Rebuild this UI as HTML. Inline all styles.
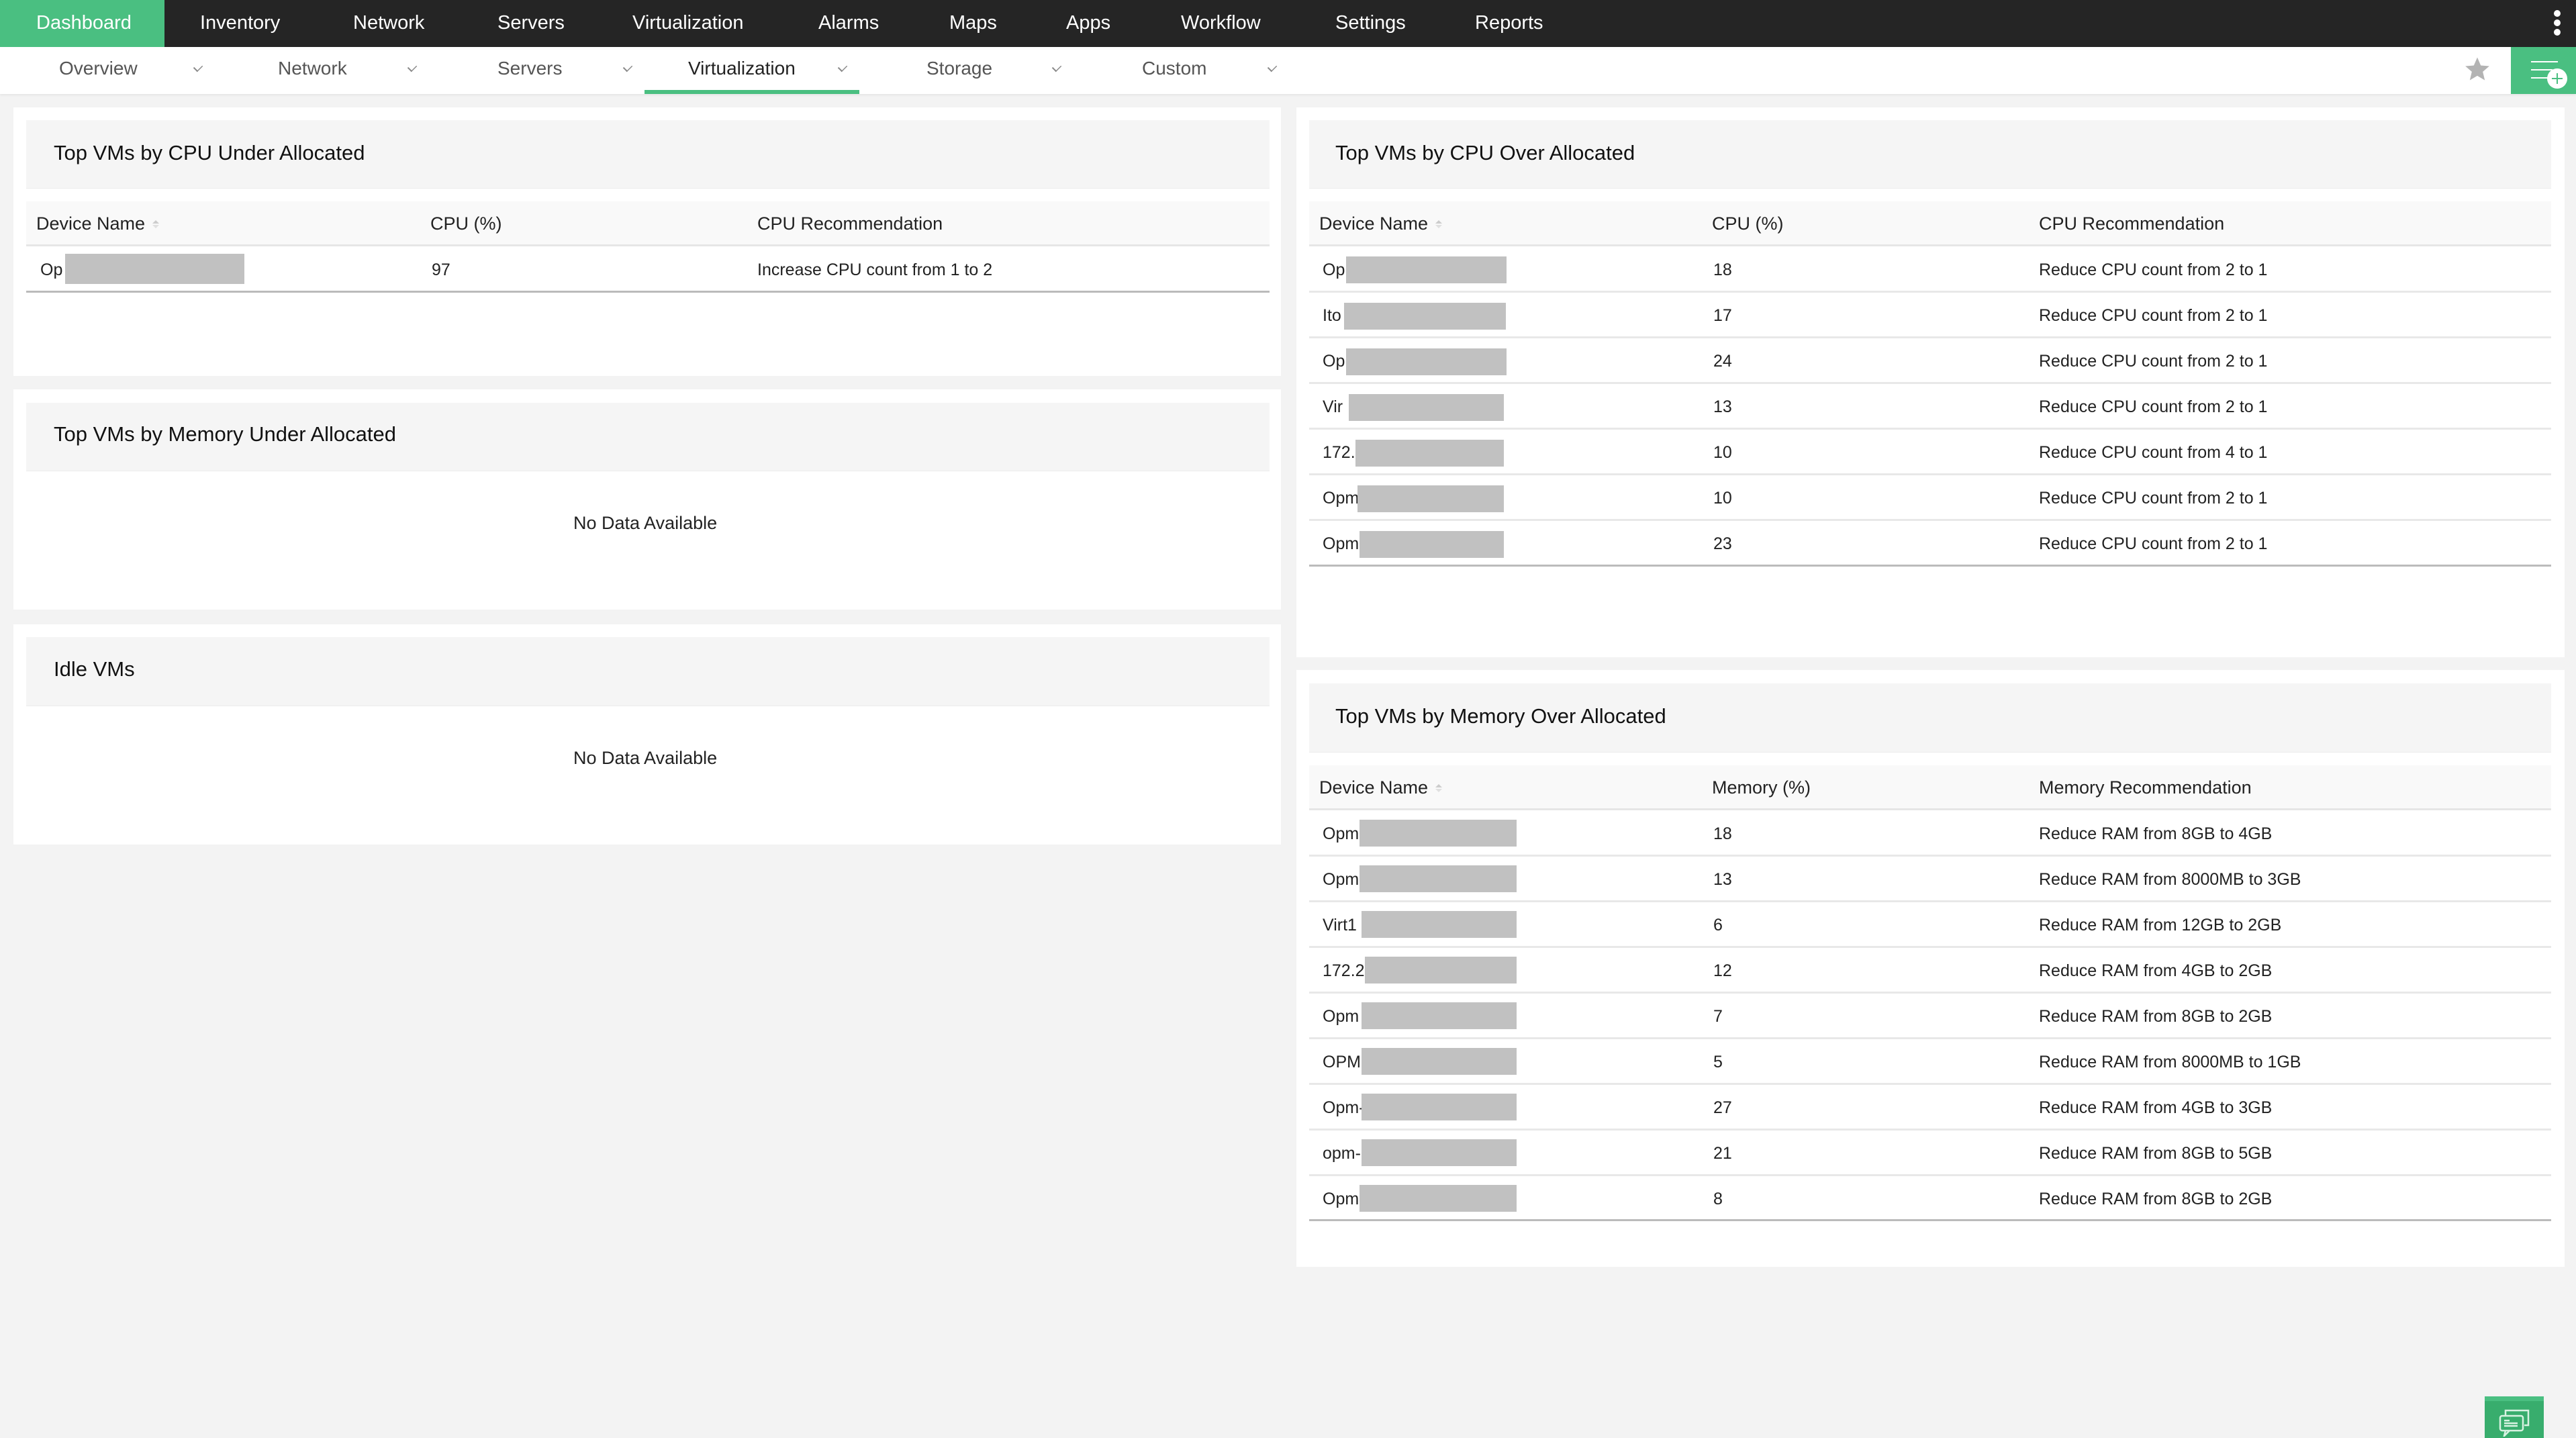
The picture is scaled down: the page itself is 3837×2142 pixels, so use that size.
<!DOCTYPE html>
<html><head><meta charset="utf-8"><style>
*{margin:0;padding:0;box-sizing:border-box}
body{width:3837px;height:2142px;background:#f3f3f3;font-family:"Liberation Sans",sans-serif;position:relative;overflow:hidden;color:#222}
.a{position:absolute}
.top{left:0;top:0;width:3837px;height:70px;background:#252525}
.nav{top:0;height:70px;line-height:68px;color:#fff;font-size:29px;white-space:nowrap}
.sub{left:0;top:70px;width:3837px;height:70px;background:#fff;box-shadow:0 2px 3px rgba(0,0,0,.06)}
.st{top:70px;line-height:64px;font-size:28px;color:#555;white-space:nowrap}
.chev{top:94px;width:12px;height:12px;border-right:2px solid #888;border-bottom:2px solid #888;transform:rotate(45deg) scaleX(.7)}
.panel{background:#fff}
.hd{background:#f5f5f5;border-bottom:1px solid #ececec}
.tt{font-size:31px;color:#111;white-space:nowrap}
.th{background:#f9f9f9;border-bottom:3px solid #e6e6e6}
.h{font-size:27px;color:#222;white-space:nowrap}
.c{font-size:25px;color:#222;white-space:nowrap;margin-top:2px}
.rb{height:3px;background:#e8e8e8}
.box{background:#c1c1c1}
.sort{width:0;height:0;border-left:5px solid transparent;border-right:5px solid transparent}
</style></head><body>
<div class="a top"></div>
<div class="a" style="left:0;top:0;width:245px;height:70px;background:#4abf81"></div>
<div class="a nav" style="left:54px">Dashboard</div>
<div class="a nav" style="left:298px">Inventory</div>
<div class="a nav" style="left:526px">Network</div>
<div class="a nav" style="left:741px">Servers</div>
<div class="a nav" style="left:942px">Virtualization</div>
<div class="a nav" style="left:1219px">Alarms</div>
<div class="a nav" style="left:1414px">Maps</div>
<div class="a nav" style="left:1588px">Apps</div>
<div class="a nav" style="left:1759px">Workflow</div>
<div class="a nav" style="left:1989px">Settings</div>
<div class="a nav" style="left:2197px">Reports</div>
<div class="a" style="left:3804px;top:15px;width:10px;height:10px;border-radius:50%;background:#fff"></div>
<div class="a" style="left:3804px;top:29px;width:10px;height:10px;border-radius:50%;background:#fff"></div>
<div class="a" style="left:3804px;top:43px;width:10px;height:10px;border-radius:50%;background:#fff"></div>

<div class="a sub"></div>
<div class="a st" style="left:88px">Overview</div><div class="a chev" style="left:289px"></div>
<div class="a st" style="left:414px">Network</div><div class="a chev" style="left:608px"></div>
<div class="a st" style="left:741px">Servers</div><div class="a chev" style="left:929px"></div>
<div class="a st" style="left:1025px;color:#222">Virtualization</div><div class="a chev" style="left:1249px"></div>
<div class="a st" style="left:1380px">Storage</div><div class="a chev" style="left:1568px"></div>
<div class="a st" style="left:1701px">Custom</div><div class="a chev" style="left:1889px"></div>
<div class="a" style="left:960px;top:134px;width:320px;height:6px;background:#4abf81"></div>
<svg class="a" style="left:3670px;top:83px" width="40" height="40" viewBox="0 0 24 24"><path d="M12 1.5l3.1 7.2 7.6.6-5.8 5 1.8 7.6L12 17.9l-6.7 4 1.8-7.6-5.8-5 7.6-.6z" fill="#b3b3b3"/></svg>
<div class="a" style="left:3740px;top:70px;width:97px;height:70px;background:#4abf81"></div>
<div class="a" style="left:3770px;top:91px;width:40px;height:2px;background:#fff"></div>
<div class="a" style="left:3770px;top:103px;width:32px;height:2px;background:#fff"></div>
<div class="a" style="left:3770px;top:115px;width:26px;height:2px;background:#fff"></div>
<div class="a" style="left:3794px;top:102px;width:30px;height:30px;border-radius:50%;background:#fff"></div>
<div class="a" style="left:3801px;top:116px;width:16px;height:2px;background:#4abf81"></div>
<div class="a" style="left:3808px;top:109px;width:2px;height:16px;background:#4abf81"></div>

<!-- Left panel 1 -->
<div class="a panel" style="left:20px;top:160px;width:1888px;height:400px"></div>
<div class="a hd" style="left:39px;top:179px;width:1852px;height:102px"></div>
<div class="a tt" style="left:80px;top:210px">Top VMs by CPU Under Allocated</div>
<div class="a th" style="left:39px;top:300px;width:1852px;height:67px"></div>
<div class="a h" style="left:54px;top:318px">Device Name</div>
<div class="a sort" style="left:227px;top:328px;border-bottom:5px solid #ccc"></div>
<div class="a sort" style="left:227px;top:335px;border-top:5px solid #e0e0e0"></div>
<div class="a h" style="left:641px;top:318px">CPU (%)</div>
<div class="a h" style="left:1128px;top:318px">CPU Recommendation</div>
<div class="a c" style="left:60px;top:386px">Op</div>
<div class="a box" style="left:97px;top:378px;width:267px;height:45px"></div>
<div class="a c" style="left:643px;top:386px">97</div>
<div class="a c" style="left:1128px;top:386px">Increase CPU count from 1 to 2</div>
<div class="a" style="left:39px;top:433px;width:1852px;height:3px;background:#bbb"></div>

<!-- Left panel 2 -->
<div class="a panel" style="left:20px;top:580px;width:1888px;height:328px"></div>
<div class="a hd" style="left:39px;top:600px;width:1852px;height:102px"></div>
<div class="a tt" style="left:80px;top:629px">Top VMs by Memory Under Allocated</div>
<div class="a c" style="left:854px;top:762px;font-size:27px">No Data Available</div>

<!-- Left panel 3 -->
<div class="a panel" style="left:20px;top:930px;width:1888px;height:328px"></div>
<div class="a hd" style="left:39px;top:949px;width:1852px;height:103px"></div>
<div class="a tt" style="left:80px;top:979px">Idle VMs</div>
<div class="a c" style="left:854px;top:1112px;font-size:27px">No Data Available</div>

<!-- Right panel 1 -->
<div class="a panel" style="left:1931px;top:160px;width:1889px;height:819px"></div>
<div class="a hd" style="left:1950px;top:179px;width:1850px;height:102px"></div>
<div class="a tt" style="left:1989px;top:210px">Top VMs by CPU Over Allocated</div>
<div class="a th" style="left:1950px;top:300px;width:1850px;height:67px"></div>
<div class="a h" style="left:1965px;top:318px">Device Name</div>
<div class="a sort" style="left:2138px;top:328px;border-bottom:5px solid #ccc"></div>
<div class="a sort" style="left:2138px;top:335px;border-top:5px solid #e0e0e0"></div>
<div class="a h" style="left:2550px;top:318px">CPU (%)</div>
<div class="a h" style="left:3037px;top:318px">CPU Recommendation</div>

<!-- Right panel 2 -->
<div class="a panel" style="left:1931px;top:998px;width:1889px;height:889px"></div>
<div class="a hd" style="left:1950px;top:1018px;width:1850px;height:103px"></div>
<div class="a tt" style="left:1989px;top:1049px">Top VMs by Memory Over Allocated</div>
<div class="a th" style="left:1950px;top:1140px;width:1850px;height:67px"></div>
<div class="a h" style="left:1965px;top:1158px">Device Name</div>
<div class="a sort" style="left:2138px;top:1168px;border-bottom:5px solid #ccc"></div>
<div class="a sort" style="left:2138px;top:1175px;border-top:5px solid #e0e0e0"></div>
<div class="a h" style="left:2550px;top:1158px">Memory (%)</div>
<div class="a h" style="left:3037px;top:1158px">Memory Recommendation</div>

<!-- CPU rows -->
<div class="a c" style="left:1970px;top:386px">Op</div><div class="a box" style="left:2005px;top:382px;width:239px;height:40px"></div><div class="a c" style="left:2552px;top:386px">18</div><div class="a c" style="left:3037px;top:386px">Reduce CPU count from 2 to 1</div><div class="a rb" style="left:1950px;top:433px;width:1850px"></div>
<div class="a c" style="left:1970px;top:454px">Ito</div><div class="a box" style="left:2002px;top:451px;width:241px;height:40px"></div><div class="a c" style="left:2552px;top:454px">17</div><div class="a c" style="left:3037px;top:454px">Reduce CPU count from 2 to 1</div><div class="a rb" style="left:1950px;top:501px;width:1850px"></div>
<div class="a c" style="left:1970px;top:522px">Op</div><div class="a box" style="left:2005px;top:519px;width:239px;height:40px"></div><div class="a c" style="left:2552px;top:522px">24</div><div class="a c" style="left:3037px;top:522px">Reduce CPU count from 2 to 1</div><div class="a rb" style="left:1950px;top:569px;width:1850px"></div>
<div class="a c" style="left:1970px;top:590px">Vir</div><div class="a box" style="left:2009px;top:587px;width:231px;height:40px"></div><div class="a c" style="left:2552px;top:590px">13</div><div class="a c" style="left:3037px;top:590px">Reduce CPU count from 2 to 1</div><div class="a rb" style="left:1950px;top:637px;width:1850px"></div>
<div class="a c" style="left:1970px;top:658px">172.</div><div class="a box" style="left:2019px;top:655px;width:221px;height:40px"></div><div class="a c" style="left:2552px;top:658px">10</div><div class="a c" style="left:3037px;top:658px">Reduce CPU count from 4 to 1</div><div class="a rb" style="left:1950px;top:705px;width:1850px"></div>
<div class="a c" style="left:1970px;top:726px">Opm</div><div class="a box" style="left:2022px;top:723px;width:218px;height:40px"></div><div class="a c" style="left:2552px;top:726px">10</div><div class="a c" style="left:3037px;top:726px">Reduce CPU count from 2 to 1</div><div class="a rb" style="left:1950px;top:773px;width:1850px"></div>
<div class="a c" style="left:1970px;top:794px">Opm</div><div class="a box" style="left:2025px;top:791px;width:215px;height:40px"></div><div class="a c" style="left:2552px;top:794px">23</div><div class="a c" style="left:3037px;top:794px">Reduce CPU count from 2 to 1</div>
<div class="a" style="left:1950px;top:841px;width:1850px;height:3px;background:#bbb"></div>

<!-- Memory rows -->
<div class="a c" style="left:1970px;top:1226px">Opm</div><div class="a box" style="left:2025px;top:1221px;width:234px;height:40px"></div><div class="a c" style="left:2552px;top:1226px">18</div><div class="a c" style="left:3037px;top:1226px">Reduce RAM from 8GB to 4GB</div><div class="a rb" style="left:1950px;top:1273px;width:1850px"></div>
<div class="a c" style="left:1970px;top:1294px">Opm</div><div class="a box" style="left:2025px;top:1289px;width:234px;height:40px"></div><div class="a c" style="left:2552px;top:1294px">13</div><div class="a c" style="left:3037px;top:1294px">Reduce RAM from 8000MB to 3GB</div><div class="a rb" style="left:1950px;top:1341px;width:1850px"></div>
<div class="a c" style="left:1970px;top:1362px">Virt1</div><div class="a box" style="left:2028px;top:1357px;width:231px;height:40px"></div><div class="a c" style="left:2552px;top:1362px">6</div><div class="a c" style="left:3037px;top:1362px">Reduce RAM from 12GB to 2GB</div><div class="a rb" style="left:1950px;top:1409px;width:1850px"></div>
<div class="a c" style="left:1970px;top:1430px">172.2</div><div class="a box" style="left:2033px;top:1425px;width:226px;height:40px"></div><div class="a c" style="left:2552px;top:1430px">12</div><div class="a c" style="left:3037px;top:1430px">Reduce RAM from 4GB to 2GB</div><div class="a rb" style="left:1950px;top:1477px;width:1850px"></div>
<div class="a c" style="left:1970px;top:1498px">Opm</div><div class="a box" style="left:2028px;top:1493px;width:231px;height:40px"></div><div class="a c" style="left:2552px;top:1498px">7</div><div class="a c" style="left:3037px;top:1498px">Reduce RAM from 8GB to 2GB</div><div class="a rb" style="left:1950px;top:1545px;width:1850px"></div>
<div class="a c" style="left:1970px;top:1566px">OPM</div><div class="a box" style="left:2028px;top:1561px;width:231px;height:40px"></div><div class="a c" style="left:2552px;top:1566px">5</div><div class="a c" style="left:3037px;top:1566px">Reduce RAM from 8000MB to 1GB</div><div class="a rb" style="left:1950px;top:1613px;width:1850px"></div>
<div class="a c" style="left:1970px;top:1634px">Opm-</div><div class="a box" style="left:2028px;top:1629px;width:231px;height:40px"></div><div class="a c" style="left:2552px;top:1634px">27</div><div class="a c" style="left:3037px;top:1634px">Reduce RAM from 4GB to 3GB</div><div class="a rb" style="left:1950px;top:1681px;width:1850px"></div>
<div class="a c" style="left:1970px;top:1702px">opm-</div><div class="a box" style="left:2028px;top:1697px;width:231px;height:40px"></div><div class="a c" style="left:2552px;top:1702px">21</div><div class="a c" style="left:3037px;top:1702px">Reduce RAM from 8GB to 5GB</div><div class="a rb" style="left:1950px;top:1749px;width:1850px"></div>
<div class="a c" style="left:1970px;top:1770px">Opm</div><div class="a box" style="left:2025px;top:1765px;width:234px;height:40px"></div><div class="a c" style="left:2552px;top:1770px">8</div><div class="a c" style="left:3037px;top:1770px">Reduce RAM from 8GB to 2GB</div>
<div class="a" style="left:1950px;top:1816px;width:1850px;height:3px;background:#bbb"></div>

<!-- chat button -->
<div class="a" style="left:3701px;top:2080px;width:88px;height:62px;background:#38ad6d;border-top:7px solid #4abf81"></div>
<svg class="a" style="left:3722px;top:2096px" width="46" height="44" viewBox="0 0 46 44" fill="none" stroke="#d8f2e2" stroke-width="2.5"><path d="M10 13V5h34v22h-6"/><rect x="2" y="13" width="34" height="22" rx="3"/><path d="M10 35l-2 8 8-8"/><path d="M8 20h8M8 24h20M8 28h20"/></svg>
</body></html>
